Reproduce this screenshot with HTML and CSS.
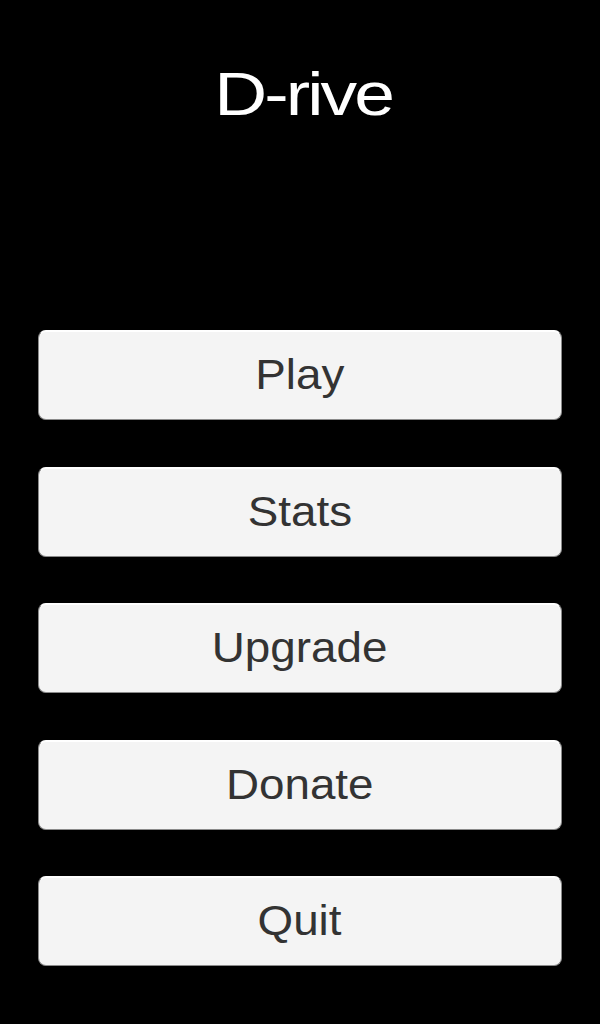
FILE: index.html
```html
<!DOCTYPE html>
<html>
<head>
<meta charset="utf-8">
<link rel="stylesheet" href="styles.css">
</head>
<body>
<div class="screen">
  <header class="head">
    <h1 class="title">D-rive</h1>
  </header>
  <nav class="menu">
    <button class="btn"><span class="label">Play</span></button>
    <button class="btn"><span class="label">Stats</span></button>
    <button class="btn"><span class="label">Upgrade</span></button>
    <button class="btn"><span class="label">Donate</span></button>
    <button class="btn"><span class="label">Quit</span></button>
  </nav>
</div>
</body>
</html>
```
FILE: styles.css
```css
html, body {
  margin: 0;
  padding: 0;
  background: #000;
}
.screen {
  width: 600px;
  height: 1024px;
  display: flex;
  flex-direction: column;
  font-family: "Liberation Sans", Arial, sans-serif;
}
.head {
  height: 330px;
  padding-top: 57px;
  box-sizing: border-box;
  display: flex;
  justify-content: center;
  align-items: flex-start;
}
.title {
  margin: 0 0 0 6px;
  display: inline-block;
  color: #fff;
  font-weight: normal;
  font-size: 61px;
  line-height: 74px;
  letter-spacing: -2.4px;
  transform: scaleX(1.2);
}
.menu {
  display: flex;
  flex-direction: column;
  gap: 46.5px;
  padding: 0 38px;
}
.btn {
  height: 90px;
  margin: 0;
  padding: 0;
  background: #f4f4f4;
  border: 1px solid #8a8a8a;
  border-top-color: #ffffff;
  border-radius: 8px;
  box-shadow: inset 0 1px 0 #ffffff;
  color: #333;
  font-family: "Liberation Sans", Arial, sans-serif;
  font-size: 42px;
}
.label {
  display: inline-block;
  transform: scaleX(1.09);
}
```
